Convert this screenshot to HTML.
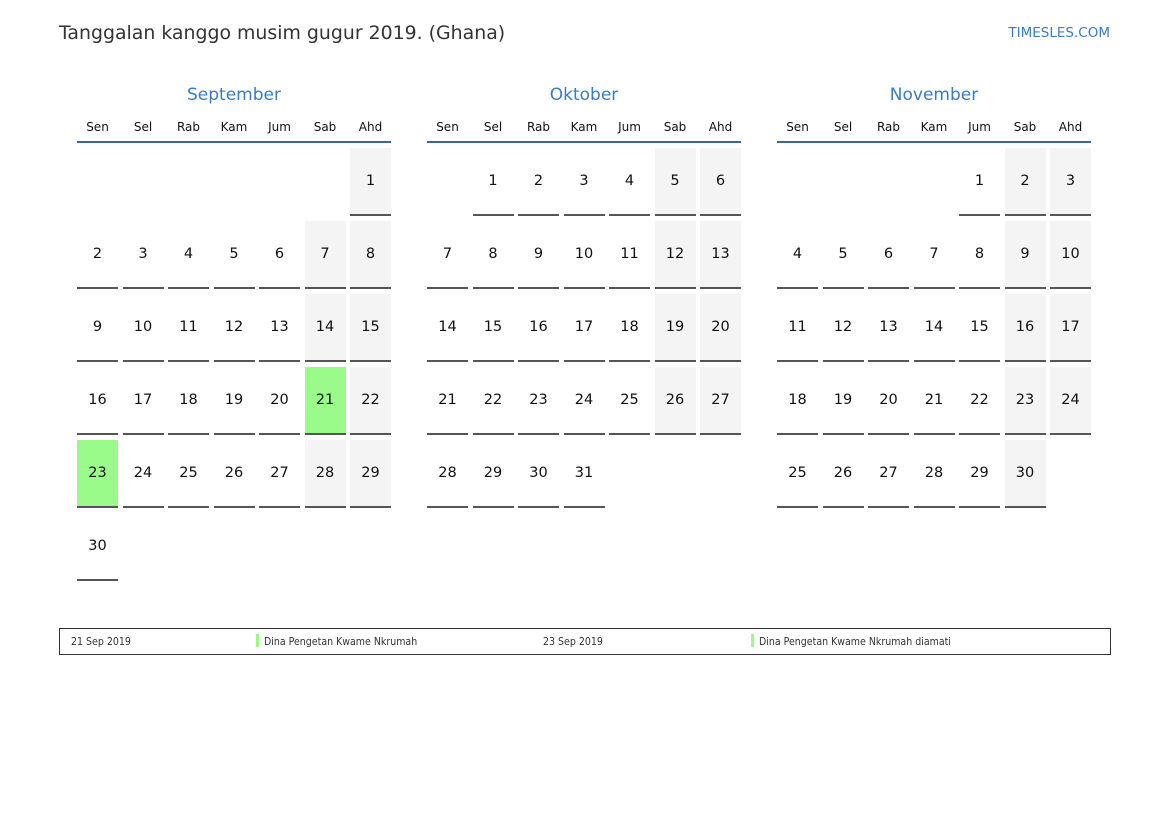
<!DOCTYPE html>
<html><head><meta charset="utf-8">
<style>
*{margin:0;padding:0;box-sizing:border-box}
body{width:1169px;height:827px;background:#fff;font-family:"DejaVu Sans","Liberation Sans",sans-serif;position:relative;overflow:hidden;color:#111}
.title{position:absolute;left:59px;top:22px;font-size:18.9px;color:#333;white-space:nowrap}
.site{position:absolute;right:59px;top:25px;font-size:13.5px;color:#3a7cc2}
.month{position:absolute;top:85px;width:314px}
.mname{text-align:center;font-size:17px;color:#3a7cc2;height:24px}
.dn{display:grid;grid-template-columns:repeat(7,41px);column-gap:4.5px;font-size:12px;text-align:center;height:34px;padding-top:11px;border-bottom:2px solid #3f6594;width:314px}
.grid{position:absolute;top:63px;display:grid;grid-template-columns:repeat(7,41px);column-gap:4.5px;row-gap:5px}
.grid div{height:68px;line-height:66px;text-align:center;font-size:14.5px;border-bottom:2px solid #555}
.grid div.e{border-bottom:none}
.grid div.w{background:#f4f4f4}
.grid div.h{background:#9afa8a}
.legend{position:absolute;left:59px;top:628px;width:1052px;height:27px;border:1.5px solid #333;font-size:10.5px;font-stretch:condensed;color:#333}
.legend span{position:absolute;top:6px;white-space:nowrap}
.bar{position:absolute;top:5px;width:3px;height:13px;background:#9afa8a}
</style></head><body>
<div class="title">Tanggalan kanggo musim gugur 2019. (Ghana)</div>
<div class="site">TIMESLES.COM</div>

<div class="month" style="left:77px">
<div class="mname">September</div>
<div class="dn"><span>Sen</span><span>Sel</span><span>Rab</span><span>Kam</span><span>Jum</span><span>Sab</span><span>Ahd</span></div>
<div class="grid">
<div class="e"></div><div class="e"></div><div class="e"></div><div class="e"></div><div class="e"></div><div class="e"></div><div class="w">1</div>
<div>2</div><div>3</div><div>4</div><div>5</div><div>6</div><div class="w">7</div><div class="w">8</div>
<div>9</div><div>10</div><div>11</div><div>12</div><div>13</div><div class="w">14</div><div class="w">15</div>
<div>16</div><div>17</div><div>18</div><div>19</div><div>20</div><div class="h">21</div><div class="w">22</div>
<div class="h">23</div><div>24</div><div>25</div><div>26</div><div>27</div><div class="w">28</div><div class="w">29</div>
<div>30</div>
</div></div>

<div class="month" style="left:427px">
<div class="mname">Oktober</div>
<div class="dn"><span>Sen</span><span>Sel</span><span>Rab</span><span>Kam</span><span>Jum</span><span>Sab</span><span>Ahd</span></div>
<div class="grid">
<div class="e"></div><div>1</div><div>2</div><div>3</div><div>4</div><div class="w">5</div><div class="w">6</div>
<div>7</div><div>8</div><div>9</div><div>10</div><div>11</div><div class="w">12</div><div class="w">13</div>
<div>14</div><div>15</div><div>16</div><div>17</div><div>18</div><div class="w">19</div><div class="w">20</div>
<div>21</div><div>22</div><div>23</div><div>24</div><div>25</div><div class="w">26</div><div class="w">27</div>
<div>28</div><div>29</div><div>30</div><div>31</div>
</div></div>

<div class="month" style="left:777px">
<div class="mname">November</div>
<div class="dn"><span>Sen</span><span>Sel</span><span>Rab</span><span>Kam</span><span>Jum</span><span>Sab</span><span>Ahd</span></div>
<div class="grid">
<div class="e"></div><div class="e"></div><div class="e"></div><div class="e"></div><div>1</div><div class="w">2</div><div class="w">3</div>
<div>4</div><div>5</div><div>6</div><div>7</div><div>8</div><div class="w">9</div><div class="w">10</div>
<div>11</div><div>12</div><div>13</div><div>14</div><div>15</div><div class="w">16</div><div class="w">17</div>
<div>18</div><div>19</div><div>20</div><div>21</div><div>22</div><div class="w">23</div><div class="w">24</div>
<div>25</div><div>26</div><div>27</div><div>28</div><div>29</div><div class="w">30</div>
</div></div>

<div class="legend">
<span style="left:11px;top:7px">21 Sep 2019</span>
<div class="bar" style="left:196px"></div>
<span style="left:204px;top:7px">Dina Pengetan Kwame Nkrumah</span>
<span style="left:483px;top:7px">23 Sep 2019</span>
<div class="bar" style="left:691px"></div>
<span style="left:699px;top:7px">Dina Pengetan Kwame Nkrumah diamati</span>
</div>
</body></html>
